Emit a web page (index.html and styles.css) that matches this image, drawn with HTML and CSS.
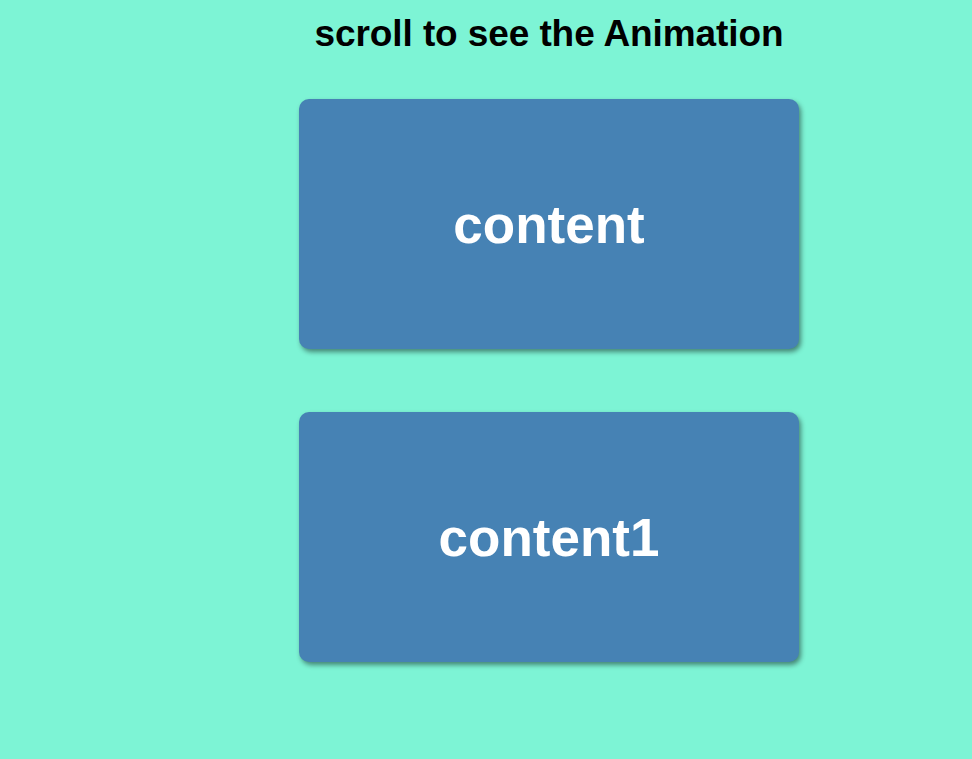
FILE: index.html
```html
<!DOCTYPE html>
<html>
<head>
<meta charset="utf-8">
<link rel="stylesheet" href="styles.css">
</head>
<body>
<main class="page">
  <h1 class="title">scroll to see the Animation</h1>
  <div class="card">content</div>
  <div class="card">content1</div>
</main>
</body>
</html>
```
FILE: styles.css
```css
html, body {
  margin: 0;
  padding: 0;
  background: #7df4d5;
  height: 100%;
}
.page {
  width: 500px;
  padding-left: 299px;
  display: flex;
  flex-direction: column;
  font-family: "Liberation Sans", Arial, sans-serif;
}
.title {
  margin: 14px 0 0;
  height: 85px;
  text-align: center;
  font-size: 37px;
  font-weight: bold;
  color: #000;
  line-height: 40px;
  letter-spacing: -0.1px;
}
.card {
  box-sizing: border-box;
  height: 250px;
  padding-top: 1px;
  margin-bottom: 63px;
  background: #4682b4;
  border-radius: 10px;
  box-shadow: 2px 3px 5px rgba(0, 0, 0, 0.45);
  display: flex;
  align-items: center;
  justify-content: center;
  color: #fff;
  font-size: 53px;
  font-weight: bold;
  letter-spacing: 0;
}
```
